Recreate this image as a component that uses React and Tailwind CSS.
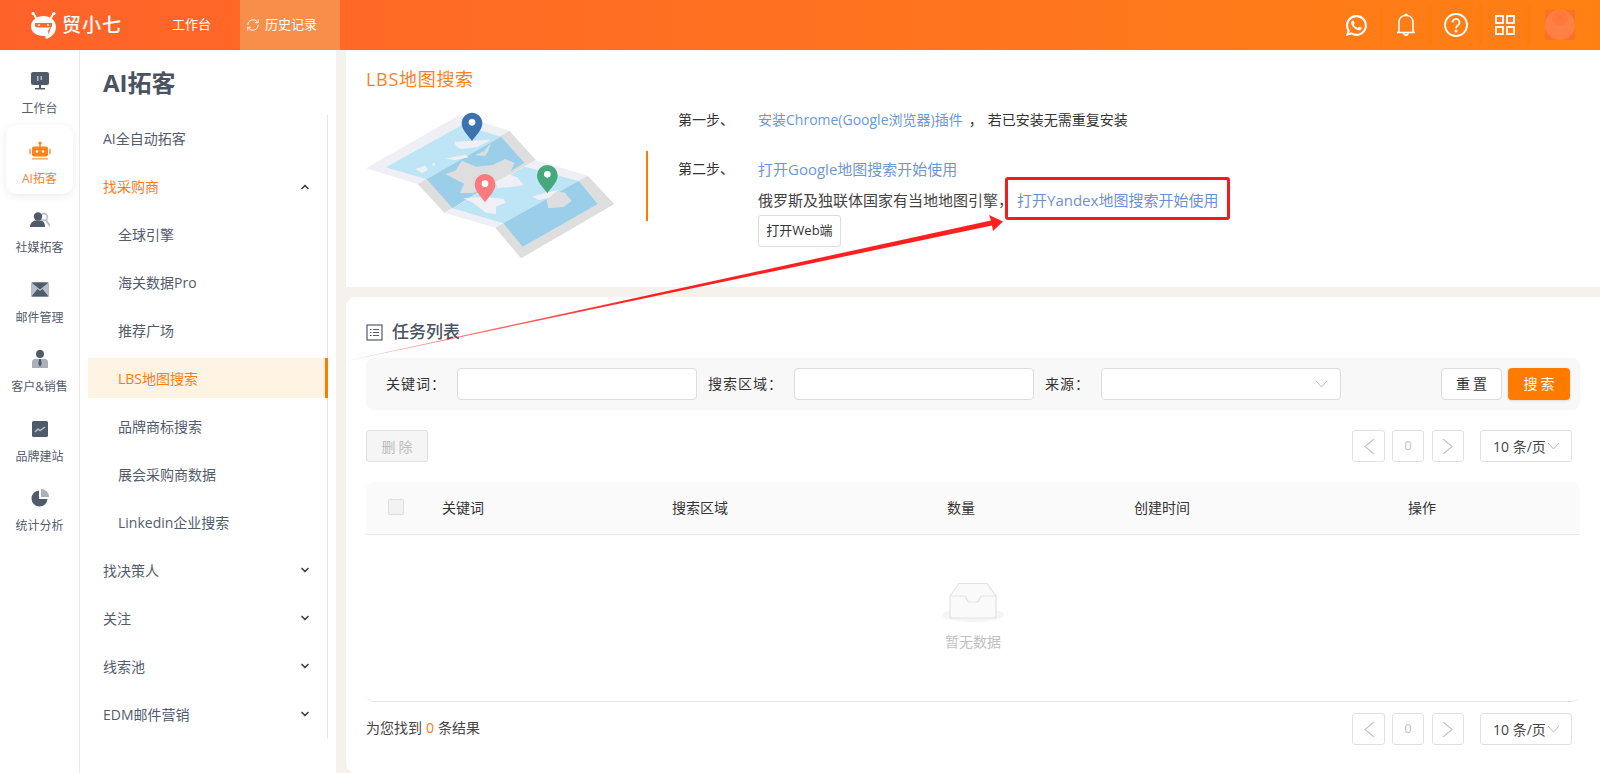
import React from "react";
import { ChevronDown, ChevronUp, RefreshCw } from "lucide-react";
import { RiWhatsappLine } from "react-icons/ri";

const railItems = [
  { key: "desk", label: "工作台" },
  { key: "ai", label: "AI拓客", active: true },
  { key: "social", label: "社媒拓客" },
  { key: "mail", label: "邮件管理" },
  { key: "client", label: "客户&销售" },
  { key: "site", label: "品牌建站" },
  { key: "stats", label: "统计分析" },
];

const RailIcon = ({ name }) => {
  if (name === "desk")
    return (
      <svg width="20" height="18" viewBox="0 0 20 18">
        <rect x="1" y="0" width="18" height="13" rx="2" fill="#4f5a6b" />
        <rect x="7" y="4" width="1.5" height="5" fill="#b9bfc8" />
        <rect x="10.5" y="4" width="1.5" height="4" fill="#b9bfc8" />
        <rect x="9" y="13" width="2" height="3" fill="#4f5a6b" />
        <rect x="5" y="16" width="10" height="1.5" fill="#4f5a6b" />
      </svg>
    );
  if (name === "ai")
    return (
      <svg width="22" height="20" viewBox="0 0 22 20">
        <circle cx="11" cy="2" r="1.6" fill="#f5841f" />
        <rect x="10.3" y="3" width="1.4" height="3" fill="#f5841f" />
        <rect x="3" y="5.5" width="16" height="10" rx="2" fill="#f5841f" />
        <rect x="0" y="7.5" width="2" height="6" rx="1" fill="#f9b072" />
        <rect x="20" y="7.5" width="2" height="6" rx="1" fill="#f9b072" />
        <circle cx="8" cy="10.5" r="1.3" fill="#fff" />
        <circle cx="14" cy="10.5" r="1.3" fill="#fff" />
        <rect x="3" y="17" width="16" height="1.6" fill="#f9b072" />
      </svg>
    );
  if (name === "social")
    return (
      <svg width="20" height="16" viewBox="0 0 20 16">
        <circle cx="14" cy="5" r="3.4" fill="none" stroke="#b8bec8" strokeWidth="1.6" />
        <path d="M16 8l4 6" stroke="#b8bec8" strokeWidth="2" />
        <circle cx="8" cy="4.5" r="4.2" fill="#4f5a6b" />
        <path d="M0 15c0-4 3-6 5-6.5h6c2.500.5 4 2.500 4 6.500z" fill="#4f5a6b" />
      </svg>
    );
  if (name === "mail")
    return (
      <svg width="18" height="15" viewBox="0 0 18 15">
        <rect x="0" y="0" width="18" height="15" rx="1.5" fill="#b8bec8" />
        <path d="M0.500 0.500h17L9 7.500zM0.500 14.500L6.500 7l2.500 2 2.500-2 6 7.500z" fill="#4f5a6b" />
      </svg>
    );
  if (name === "client")
    return (
      <svg width="16" height="18" viewBox="0 0 16 18">
        <circle cx="8" cy="4" r="4" fill="#4f5a6b" />
        <path d="M0 18v-6c0-2 1.500-3 3-3h10c1.500 0 3 1 3 3v6z" fill="#aab1bc" />
        <path d="M7 9h2l.7 5L8 17l-1.700-3z" fill="#4f5a6b" />
      </svg>
    );
  if (name === "site")
    return (
      <svg width="16" height="16" viewBox="0 0 16 16">
        <rect width="16" height="16" rx="1.500" fill="#4f5a6b" />
        <path d="M3 11l3-3 2 1.500L13 6" stroke="#b8bec8" strokeWidth="1.500" fill="none" />
      </svg>
    );
  return (
    <svg width="18" height="18" viewBox="0 0 18 18">
      <path d="M8 1.500A8 8 0 1 0 16.500 10H8z" fill="#4f5a6b" />
      <path d="M10 0a8 8 0 0 1 8 8h-8z" fill="#aab1bc" />
    </svg>
  );
};

const MapArt = () => (
  <svg width="250" height="150" viewBox="80 150 750 450" className="shrink-0">
    <polygon points="80,325 360,165 510,212 235,372" fill="#eef0f5" />
    <polygon points="510,212 590,300 315,458 235,372" fill="#dedede" />
    <polygon points="590,300 745,347 468,503 315,458" fill="#eef0f5" />
    <polygon points="745,347 825,432 545,595 468,503" fill="#dedede" />
    <polygon points="140,322 368,195 485,230 262,358" fill="#bde5f5" />
    <polygon points="485,230 555,308 340,445 262,358" fill="#9bcfe9" />
    <polygon points="555,320 718,363 492,490 340,445" fill="#bde5f5" />
    <polygon points="718,363 775,432 550,560 492,490" fill="#9bcfe9" />
    <path d="M345 245l110-6-40 22-50 6-15-8zM318 296l60-12 10 8-40 8zM228 328l30-12 8 14-18 10zM276 312l12-4-2 10z" fill="#eef0f5" />
    <path d="M407 285l28-12 20-25-8 25-10 15zM318 342l30-10 20-30 42 18 50-5 38-18 28 12-14 30-50 30-60 30-40 0 12-28z" fill="#dedede" />
    <path d="M470 365l40-22 25 10 18 22-40 6-40 4zM372 415l60-5 60 6 8 12-30 12 0 22-30-4-40-30z" fill="#eef0f5" />
    <path d="M578 410l40-12 40-8-20 22-40 8z" fill="#eef0f5" />
    <path d="M622 420l30-26 25 4 20 25-25 18-45 4z" fill="#dedede" />
    <path d="M398 243c-12-18-31-32-31-54a31 31 0 0 1 62 0c0 22-19 36-31 54z" fill="#3d72ad" />
    <circle cx="398" cy="187" r="10" fill="#fff" />
    <path d="M437 427c-12-18-31-32-31-54a31 31 0 0 1 62 0c0 22-19 36-31 54z" fill="#fa7a80" />
    <circle cx="437" cy="371" r="10" fill="#fff" />
    <path d="M624 400c-12-18-31-32-31-54a31 31 0 0 1 62 0c0 22-19 36-31 54z" fill="#45a97d" />
    <circle cx="624" cy="343" r="10" fill="#fff" />
  </svg>
);

// thin wide V used by the select boxes
const SelectArrow = ({ className }) => (
  <svg width="13" height="8" viewBox="0 0 13 8" fill="none" stroke="#bdbdbd" strokeWidth="1" className={className}>
    <path d="M1 1l5.500 6L12 1" />
  </svg>
);

const Pager = () => (
  <div className="flex items-center text-[#c4c4c4]">
    <div className="w-[33px] h-[32px] flex items-center justify-center border border-[#e0e0e0] rounded-[3px]">
      <svg width="12" height="17" viewBox="0 0 12 17" fill="none" stroke="#c4c4c4" strokeWidth="1.200">
        <path d="M11 1L2 8.500l9 7.500" />
      </svg>
    </div>
    <div className="w-[32px] h-[32px] ml-[7px] flex items-center justify-center border border-[#e0e0e0] rounded-[3px] text-[13px]">
      0
    </div>
    <div className="w-[32px] h-[32px] ml-[8px] flex items-center justify-center border border-[#e0e0e0] rounded-[3px]">
      <svg width="12" height="17" viewBox="0 0 12 17" fill="none" stroke="#c4c4c4" strokeWidth="1.200">
        <path d="M1 1l9 7.500L1 16" />
      </svg>
    </div>
    <div className="w-[92px] h-[32px] ml-[16px] pl-[12px] flex items-center border border-[#e0e0e0] rounded-[3px] text-[14px] text-[#444] whitespace-nowrap">
      10 条/页
      <SelectArrow className="ml-[1px]" />
    </div>
  </div>
);

const SideRow = ({ children, sub, active, open, arrow }) => (
  <div
    className={`relative h-[40px] mb-[8px] ml-[8px] w-[240px] flex items-center text-[14px] ${
      sub ? "pl-[30px]" : "pl-[15px]"
    } ${active ? "bg-[#fff4e3] text-[#ff7b14] border-r-[3px] border-[#ff7a00]" : open ? "text-[#ff7b14]" : "text-[#535c6c]"}`}
  >
    {children}
    {arrow &&
      (open ? (
        <ChevronUp size={12} strokeWidth={3.500} className="absolute right-[17px] top-[15px] text-[#444]" />
      ) : (
        <ChevronDown size={12} strokeWidth={3.500} className="absolute right-[17px] top-[14px] text-[#444]" />
      ))}
  </div>
);

export default function App() {
  return (
    <div
      className="relative w-full h-screen overflow-hidden bg-white flex flex-col"
      style={{ fontFamily: "'Open Sans','Noto Sans CJK SC',sans-serif" }}
    >
      {/* header */}
      <header className="h-[50px] shrink-0 flex items-center bg-gradient-to-r from-[#ff6229] to-[#ff8012] text-white">
        <div className="w-[172px] shrink-0 pl-[30px] flex items-center">
          <svg width="27" height="28" viewBox="0 0 27 28">
            <path d="M6 7L3.500 2.500M21 7l2.500-4.500" stroke="#fff" strokeWidth="2" strokeLinecap="round" />
            <circle cx="3" cy="2.500" r="1.500" fill="#fff" />
            <circle cx="24" cy="2.500" r="1.500" fill="#fff" />
            <path d="M13.500 5C20 5 26 9.500 26 16c0 5-3.500 9-7.500 11l-2.500 1-1-3C7 25 1 22 1 15 1 9.500 7 5 13.500 5z" fill="#fff" />
            <path d="M5 12h17v2.500c0 1-1 2-2 2H7c-1 0-2-1-2-2z" fill="#ff6a2a" />
            <circle cx="9" cy="14" r="1" fill="#fff" />
            <circle cx="18" cy="14" r="1" fill="#fff" />
            <path d="M18 20l2-3.500h1l-2.500 7z" fill="#ff6a2a" />
          </svg>
          <span className="ml-[5px] text-[19px] font-medium tracking-[1px] whitespace-nowrap">贸小七</span>
        </div>
        <div className="w-[68px] shrink-0 text-[13px]">工作台</div>
        <div className="w-[100px] h-full shrink-0 bg-[#f78f4b] flex items-center pl-[6px] text-[13px]">
          <RefreshCw size={14} strokeWidth={1.500} />
          <span className="ml-[5px]">历史记录</span>
        </div>
        <div className="ml-auto flex items-center h-full pr-[25px]">
          <div className="w-[50px] h-[40px] flex items-center justify-center border-r-[3px] border-[#ff7b0e]">
            <RiWhatsappLine size={25} />
          </div>
          <div className="w-[49px] h-[40px] flex items-center justify-center border-r-[4px] border-[#ff7b0e]">
            <svg width="20" height="24" viewBox="0 0 20 24" fill="none" stroke="#fff" strokeWidth="1.600">
              <path d="M3 19.500V9c0-4 3-6.500 7-6.500S17 5 17 9v10.500" />
              <path d="M1 19.500h18" />
              <path d="M8 20c0 3 4 3 4 0" />
              <path d="M9 2.500c0-1.500 2-1.500 2 0" />
            </svg>
          </div>
          <div className="w-[50px] h-[40px] flex items-center justify-center border-r-[3px] border-[#ff7b0e]">
            <svg width="24" height="24" viewBox="0 0 24 24" fill="none" stroke="#fff" strokeWidth="1.800">
              <circle cx="12" cy="12" r="11" />
              <path d="M8.500 9.500a3.500 3.500 0 1 1 5.500 2.800c-1.200.8-2 1.400-2 3" />
              <circle cx="12" cy="18" r="0.600" fill="#fff" />
            </svg>
          </div>
          <div className="w-[49px] h-[40px] flex items-center justify-center border-r-[4px] border-[#ff7b0e]">
            <svg width="20" height="20" viewBox="0 0 20 20" fill="none" stroke="#fff" strokeWidth="1.800">
              <rect x="1" y="1" width="7" height="7" />
              <rect x="12" y="1" width="7" height="7" />
              <rect x="1" y="12" width="7" height="7" />
              <rect x="12" y="12" width="7" height="7" />
            </svg>
          </div>
          <div className="ml-[14px] w-[30px] h-[30px] bg-[#ff6f28] flex items-center justify-center">
            <div className="relative w-[30px] h-[30px] rounded-full bg-[#ff8044] overflow-hidden">
              <div className="absolute left-[7px] top-[1px] w-[16px] h-[14px] rounded-full bg-[#ff7a3a]" />
            </div>
          </div>
        </div>
      </header>

      <div className="flex flex-1 min-h-0">
        {/* icon rail */}
        <nav className="w-[80px] shrink-0 border-r border-[#e8e8e8] pt-[5px] bg-white">
          {railItems.map((item) => (
            <div
              key={item.key}
              className={`mx-[6px] w-[67px] h-[69.5px] flex flex-col items-center ${
                item.active ? "bg-white rounded-[10px] shadow-[0_2px_10px_rgba(0,0,0,0.08)] text-[#f5841f]" : "text-[#535c6c]"
              }`}
            >
              <div className="h-[20px] mt-[16px] flex items-center justify-center">
                <RailIcon name={item.key} />
              </div>
              <div className="mt-[9px] text-[12px] leading-[18px] whitespace-nowrap">{item.label}</div>
            </div>
          ))}
        </nav>

        {/* second menu */}
        <aside className="relative w-[256px] shrink-0 bg-white">
          <div className="h-[68px] pl-[23px] pb-[2px] flex items-center text-[24px] font-bold text-[#4a5362]">AI拓客</div>
          <div className="w-[248px] border-r border-[#e4e4e4] h-[624px] -mt-[3px] pt-[3px]">
            <SideRow>AI全自动拓客</SideRow>
            <SideRow open arrow>找采购商</SideRow>
            <SideRow sub>全球引擎</SideRow>
            <SideRow sub>海关数据Pro</SideRow>
            <SideRow sub>推荐广场</SideRow>
            <SideRow sub active>LBS地图搜索</SideRow>
            <SideRow sub>品牌商标搜索</SideRow>
            <SideRow sub>展会采购商数据</SideRow>
            <SideRow sub>Linkedin企业搜索</SideRow>
            <SideRow arrow>找决策人</SideRow>
            <SideRow arrow>关注</SideRow>
            <SideRow arrow>线索池</SideRow>
            <SideRow arrow>EDM邮件营销</SideRow>
          </div>
        </aside>

        {/* main */}
        <main className="flex-1 min-w-0 pl-[10px] bg-[#f5f2ed] flex flex-col gap-[10px]">
          <section className="h-[237px] shrink-0 bg-white px-[20px] pt-[17px]">
            <h1 className="text-[18px] leading-[24px] tracking-[0.7px] text-[#ff7f1f]">LBS地图搜索</h1>
            <div className="flex mt-[19px]">
              <MapArt />
              <div className="ml-[30px] text-[14px] text-[#333]">
                <div className="flex h-[20px] items-center pl-[32px] -mt-[1px]">
                  <span className="w-[80px]">第一步、</span>
                  <span className="text-[#6b97d6]">安装Chrome(Google浏览器)插件</span>
                  <span className="ml-[6px]">，</span>
                  <span className="ml-[5px]">若已安装无需重复安装</span>
                </div>
                <div className="flex mt-[22px]">
                  <div className="w-[2px] h-[70px] bg-[#ff7a00] shrink-0" />
                  <div className="pl-[30px] flex pt-[8px]">
                    <span className="w-[80px] leading-[20px]">第二步、</span>
                    <div>
                      <div className="leading-[20px] text-[15px] text-[#6b97d6]">打开Google地图搜索开始使用</div>
                      <div className="mt-[11px] leading-[20px] text-[15px] text-[#444] flex whitespace-nowrap">
                        俄罗斯及独联体国家有当地地图引擎，
                        <span className="relative ml-[4px] text-[#6f8fd0]">
                          打开Yandex地图搜索开始使用
                          <span className="absolute -left-[12px] -right-[12px] -top-[13px] -bottom-[10px] border-[3px] border-[#f21c1c] rounded-[3px]" />
                        </span>
                      </div>
                      <button className="block mt-[5px] h-[32px] w-[83px] border border-[#ddd] rounded-[3px] text-[13px] text-[#333]">
                        打开Web端
                      </button>
                    </div>
                  </div>
                </div>
              </div>
            </div>
          </section>

          <section className="flex-1 min-h-0 bg-white rounded-l-[10px] px-[20px] pt-[24px]">
            <div className="h-[22px] flex items-center">
              <svg width="17" height="17" viewBox="0 0 17 17" fill="none" stroke="#535c6c">
                <rect x="1" y="1" width="15" height="15" strokeWidth="1.200" />
                <path d="M4 5.500h1.500M7 5.500h6M4 8.500h1.500M7 8.500h6M4 11.500h1.500M7 11.500h6" strokeWidth="1.200" />
              </svg>
              <span className="ml-[9px] text-[17px] font-medium text-[#4a5362]">任务列表</span>
            </div>

            <div className="mt-[15px] h-[52px] bg-[#f8f8f8] rounded-[8px] flex items-center text-[14px] text-[#333]">
              <span className="ml-[20px] w-[71px] tracking-[1px] pb-[2px]">关键词：</span>
              <div className="w-[240px] h-[32px] bg-white border border-[#ddd] rounded-[4px]" />
              <span className="ml-[11px] w-[86px] tracking-[1px] pb-[2px]">搜索区域：</span>
              <div className="w-[240px] h-[32px] bg-white border border-[#ddd] rounded-[4px]" />
              <span className="ml-[11px] w-[56px] tracking-[1px] pb-[2px]">来源：</span>
              <div className="w-[240px] h-[32px] bg-white border border-[#ddd] rounded-[4px] flex items-center justify-end pr-[12px]">
                <SelectArrow />
              </div>
              <button className="ml-[100px] pl-[3px] pb-[1px] w-[61px] h-[32px] bg-white border border-[#ddd] rounded-[4px] tracking-[3px]">重置</button>
              <button className="ml-[6px] pl-[3px] pb-[1px] w-[62px] h-[32px] bg-[#ff7b00] text-white rounded-[4px] tracking-[3px] shadow-sm">搜索</button>
            </div>

            <div className="mt-[20px] h-[32px] flex items-center justify-between pr-[8px]">
              <button className="w-[62px] pl-[3px] h-[32px] bg-[#f5f5f5] border border-[#e0e0e0] rounded-[3px] text-[14px] text-[#bdbdbd] tracking-[3px]">
                删除
              </button>
              <Pager />
            </div>

            <div className="mt-[20px] h-[53px] pb-[2px] bg-[#fafafa] rounded-t-[8px] border-b border-[#e8e8e8] flex items-center text-[14px] text-[#333]">
              <div className="w-[76px] pl-[22px]">
                <div className="w-[16px] h-[16px] bg-[#f2f2f2] border border-[#ddd] rounded-[2px]" />
              </div>
              <div className="w-[230px]">关键词</div>
              <div className="w-[275px]">搜索区域</div>
              <div className="w-[187px]">数量</div>
              <div className="w-[274px]">创建时间</div>
              <div>操作</div>
            </div>

            <div className="h-[167px] border-b border-[#e6e6e6] rounded-b-[8px] flex flex-col items-center pt-[47px]">
              <svg width="64" height="40" viewBox="0 0 64 40">
                <ellipse cx="32" cy="33" rx="31" ry="7" fill="#f5f5f5" />
                <path d="M9 14L18 1.500h28L55 14v20c0 1-1 2-2 2H11c-1 0-2-1-2-2z" fill="#fafafa" stroke="#e3e3e3" strokeWidth="1.200" />
                <path d="M9 14h15c1 0 1.500 6 4 6h8c2.500 0 3-6 4-6h15" fill="none" stroke="#e3e3e3" strokeWidth="1.200" />
              </svg>
              <div className="mt-[9px] text-[14px] text-[#c0c0c0]">暂无数据</div>
            </div>

            <div className="mt-[11px] h-[32px] flex items-center justify-between pr-[8px] text-[14px] text-[#444]">
              <div className="pb-[3px]">
                为您找到<span className="mx-[4px] text-[#ff7b14]">0</span>条结果
              </div>
              <Pager />
            </div>
          </section>
        </main>
      </div>

      {/* annotation arrow */}
      <svg className="absolute left-0 top-0 pointer-events-none" width="1600" height="773">
        <defs>
          <linearGradient id="arrowFade" gradientUnits="userSpaceOnUse" x1="337" y1="363" x2="640" y2="300">
            <stop offset="0" stopColor="#ff1f1f" stopOpacity="0.35" />
            <stop offset="1" stopColor="#ff1f1f" />
          </linearGradient>
        </defs>
        <polygon
          points="337,363 991,220.500 989,215 1003,221.500 993,231 992,225.500"
          fill="url(#arrowFade)"
        />
      </svg>
    </div>
  );
}
